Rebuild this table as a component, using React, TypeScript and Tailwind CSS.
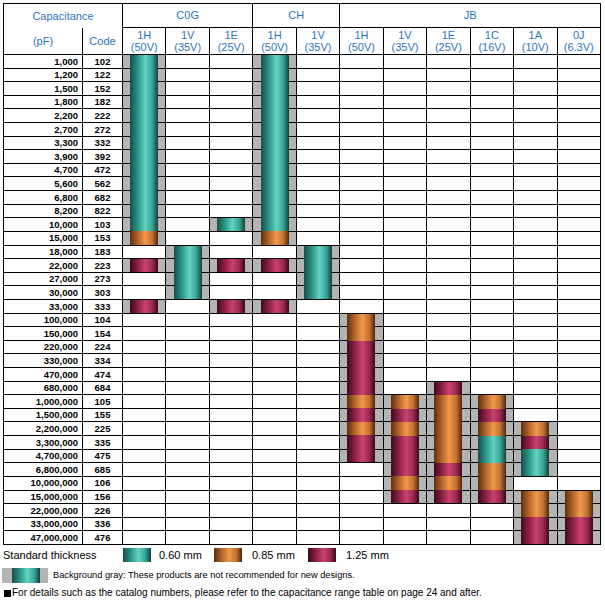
type Seg = 't' | 'o' | 'm'

// 원통 느낌의 가로 그라데이션
const SEG_CLASS: Record<Seg, string> = {
  t: 'bg-[linear-gradient(90deg,#1b4c48_0%,#2a9488_28%,#63d3c3_55%,#36a294_80%,#163d39_100%)]',
  o: 'bg-[linear-gradient(90deg,#5a300e_0%,#b5652a_28%,#f0994c_55%,#c27030_80%,#4a280b_100%)]',
  m: 'bg-[linear-gradient(90deg,#3c0a1d_0%,#8c2045_28%,#c8426e_55%,#9a2850_80%,#37081a_100%)]',
}

const ROWS: [string, string][] = [
  ['1,000', '102'], ['1,200', '122'], ['1,500', '152'], ['1,800', '182'],
  ['2,200', '222'], ['2,700', '272'], ['3,300', '332'], ['3,900', '392'],
  ['4,700', '472'], ['5,600', '562'], ['6,800', '682'], ['8,200', '822'],
  ['10,000', '103'], ['15,000', '153'], ['18,000', '183'], ['22,000', '223'],
  ['27,000', '273'], ['30,000', '303'], ['33,000', '333'], ['100,000', '104'],
  ['150,000', '154'], ['220,000', '224'], ['330,000', '334'], ['470,000', '474'],
  ['680,000', '684'], ['1,000,000', '105'], ['1,500,000', '155'], ['2,200,000', '225'],
  ['3,300,000', '335'], ['4,700,000', '475'], ['6,800,000', '685'], ['10,000,000', '106'],
  ['15,000,000', '156'], ['22,000,000', '226'], ['33,000,000', '336'], ['47,000,000', '476'],
]

const VOLTS: [string, string][] = [
  ['1H', '(50V)'], ['1V', '(35V)'], ['1E', '(25V)'],
  ['1H', '(50V)'], ['1V', '(35V)'],
  ['1H', '(50V)'], ['1V', '(35V)'], ['1E', '(25V)'], ['1C', '(16V)'], ['1A', '(10V)'], ['0J', '(6.3V)'],
]

// col: 전압 열 (0 = C0G 1H), start: 행 인덱스, segs: 행별 두께
const BARS: { col: number; start: number; segs: string }[] = [
  { col: 0, start: 0, segs: 'ttttttttttttto' },
  { col: 0, start: 15, segs: 'm' },
  { col: 0, start: 18, segs: 'm' },
  { col: 1, start: 14, segs: 'tttt' },
  { col: 2, start: 12, segs: 't' },
  { col: 2, start: 15, segs: 'm' },
  { col: 2, start: 18, segs: 'm' },
  { col: 3, start: 0, segs: 'ttttttttttttto' },
  { col: 3, start: 15, segs: 'm' },
  { col: 3, start: 18, segs: 'm' },
  { col: 4, start: 14, segs: 'tttt' },
  { col: 5, start: 19, segs: 'oommmmomomm' },
  { col: 6, start: 25, segs: 'omommmom' },
  { col: 7, start: 24, segs: 'mooooomom' },
  { col: 8, start: 25, segs: 'omottoom' },
  { col: 9, start: 27, segs: 'omtt' },
  { col: 9, start: 32, segs: 'oomm' },
  { col: 10, start: 32, segs: 'oomm' },
]

const gray = new Set<string>()
for (const b of BARS) {
  for (let i = 0; i < b.segs.length; i++) gray.add(`${b.start + i}-${b.col}`)
}

function Swatch({ seg }: { seg: Seg }) {
  return <div className={`h-[14px] w-[28px] flex-none ${SEG_CLASS[seg]}`} />
}

export default function App() {
  return (
    <div className="min-h-[605px] bg-white pl-[3px] pt-[3px] font-['Liberation_Sans',Arial,sans-serif] text-black">
      <div className="grid h-[542px] w-[598px] grid-cols-[78px_39px_repeat(11,minmax(0,1fr))] grid-rows-[23px_26px_repeat(36,minmax(0,1fr))] gap-px bg-black p-px">
        {/* 헤더 */}
        <div className="col-start-1 col-end-3 row-start-1 row-end-3 flex flex-col bg-white text-[11px] text-[#2f73b8]">
          <div className="flex h-[24px] items-center justify-center">Capacitance</div>
          <div className="flex flex-1">
            <div className="flex w-[78px] items-center justify-center">(pF)</div>
            <div className="w-px bg-black" />
            <div className="flex flex-1 items-center justify-center">Code</div>
          </div>
        </div>
        <div className="col-start-3 col-end-6 row-start-1 flex items-center justify-center bg-white text-[11px] text-[#2f73b8]">C0G</div>
        <div className="col-start-6 col-end-8 row-start-1 flex items-center justify-center bg-white text-[11px] text-[#2f73b8]">CH</div>
        <div className="col-start-8 col-end-14 row-start-1 flex items-center justify-center bg-white text-[11px] text-[#2f73b8]">JB</div>
        {VOLTS.map(([a, b], i) => (
          <div
            key={i}
            className="row-start-2 flex flex-col items-center justify-center bg-white text-[11px] leading-[12px] text-[#2f73b8]"
            style={{ gridColumn: i + 3 }}
          >
            <span>{a}</span>
            <span>{b}</span>
          </div>
        ))}

        {/* 데이터 행 */}
        {ROWS.map(([cap, code], r) => (
          <div key={r} className="contents">
            <div
              className="flex items-center justify-end bg-white pr-[4px] text-[9.5px] font-bold leading-none"
              style={{ gridRow: r + 3, gridColumn: 1 }}
            >
              {cap}
            </div>
            <div
              className="flex items-center justify-center bg-white text-[9.5px] font-bold leading-none"
              style={{ gridRow: r + 3, gridColumn: 2 }}
            >
              {code}
            </div>
            {VOLTS.map((_, c) => (
              <div
                key={c}
                className={gray.has(`${r}-${c}`) ? 'bg-[#b4b4b4]' : 'bg-white'}
                style={{ gridRow: r + 3, gridColumn: c + 3 }}
              />
            ))}
          </div>
        ))}

        {/* 막대 */}
        {BARS.map((b, i) => (
          <div
            key={i}
            className="z-10 flex w-[28px] flex-col justify-self-center"
            style={{ gridColumn: b.col + 3, gridRow: `${b.start + 3} / span ${b.segs.length}` }}
          >
            {(b.segs.split('') as Seg[]).map((s, j) => (
              <div key={j} className={`flex-1 ${SEG_CLASS[s]}`} />
            ))}
          </div>
        ))}
      </div>

      {/* 범례 */}
      <div className="mt-[3px] flex h-[14px] items-center text-[11px] leading-none">
        <span className="w-[120px] flex-none">Standard thickness</span>
        <Swatch seg="t" />
        <span className="ml-[8px] w-[55px] flex-none">0.60 mm</span>
        <Swatch seg="o" />
        <span className="ml-[10px] w-[56px] flex-none">0.85 mm</span>
        <Swatch seg="m" />
        <span className="ml-[10px]">1.25 mm</span>
      </div>
      <div className="mt-[6px] flex h-[15px] items-center">
        <div className="ml-[-1px] h-[15px] w-[46px] flex-none bg-[#b4b4b4] pl-[10px]">
          <div className={`h-full w-[28px] ${SEG_CLASS.t}`} />
        </div>
        <span className="ml-[5px] text-[9.25px] leading-none">
          Background gray: These products are not recommended for new designs.
        </span>
      </div>
      <div className="mt-[5px] flex h-[10px] items-center">
        <div className="ml-px h-[7px] w-[7px] flex-none bg-black" />
        <span className="ml-px text-[10px] leading-none">
          For details such as the catalog numbers, please refer to the capacitance range table on page 24 and after.
        </span>
      </div>
    </div>
  )
}
